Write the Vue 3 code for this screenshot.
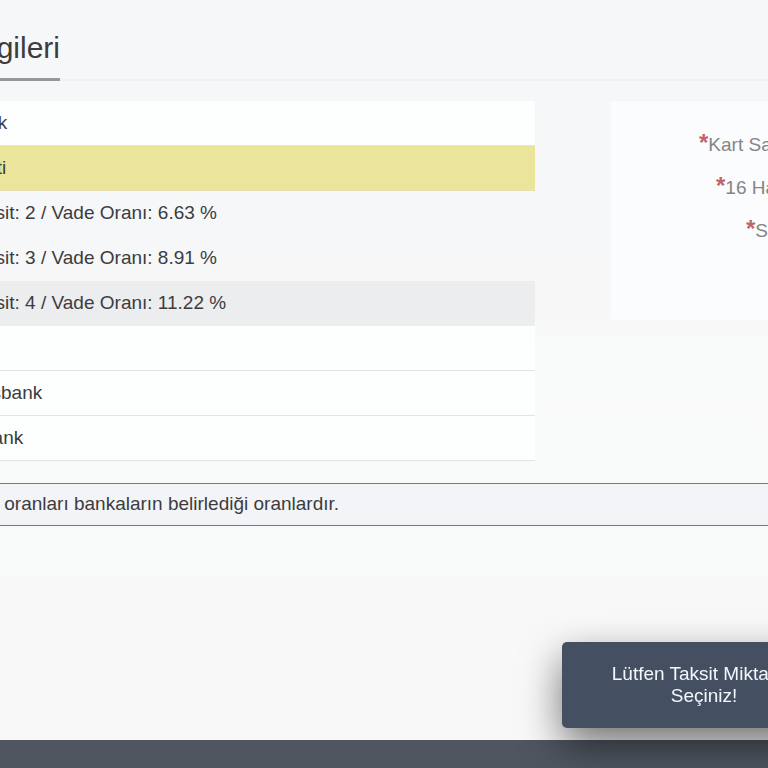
<script setup>
import { ref } from 'vue'

const banks = [
  { name: 'Akbank', installments: [] },
  {
    name: 'Garanti',
    installments: [
      { count: 2, rate: '6.63' },
      { count: 3, rate: '8.91' },
      { count: 4, rate: '11.22' }
    ]
  },
  { name: 'İşbank', installments: [] },
  { name: 'Finansbank', installments: [] },
  { name: 'Halkbank', installments: [] }
]

const fields = [
  { id: 'holder', label: 'Kart Sahibi' },
  { id: 'number', label: '16 Haneli No' },
  { id: 'expiry', label: 'Son Tarih' }
]

const selectedBank = ref('Garanti')
const selectedCount = ref(4)

const selectBank = (name) => {
  selectedBank.value = name
}
</script>

<template>
  <div class="page">
    <main class="content">
      <header class="heading">
        <h2>Ödeme Bilgileri</h2>
      </header>

      <div class="columns">
        <ul class="bank-list">
          <li v-for="bank in banks" :key="bank.name">
            <button
              class="bank"
              :class="{ active: selectedBank === bank.name }"
              @click="selectBank(bank.name)"
            >
              {{ bank.name }}
            </button>
            <template v-if="selectedBank === bank.name">
              <button
                v-for="item in bank.installments"
                :key="item.count"
                class="installment"
                :class="{ chosen: selectedCount === item.count }"
                @click="selectedCount = item.count"
              >
                Taksit: {{ item.count }} / Vade Oranı: {{ item.rate }} %
              </button>
            </template>
          </li>
        </ul>

        <form class="card-form">
          <div v-for="field in fields" :key="field.id" class="field" :class="field.id">
            <label :for="field.id"><span class="required">*</span>{{ field.label }}</label>
            <input :id="field.id" type="text" />
          </div>
        </form>
      </div>

      <p class="note">Vade oranları bankaların belirlediği oranlardır.</p>
    </main>

    <footer class="footer"></footer>

    <div class="toast" role="alert">Lütfen Taksit Miktarını Seçiniz!</div>
  </div>
</template>

<style>
body {
  background: #f8f9f9;
}
</style>

<style scoped>
.page {
  min-height: 100vh;
  display: flex;
  flex-direction: column;
  overflow: hidden;
  background: linear-gradient(#f6f7fa, #f7f7f8 300px, #f9fafa 360px, #f8f8f8);
  color: #3c3c3e;
  font-family: "Liberation Sans", Arial, sans-serif;
  font-size: 19px;
  line-height: 22px;
}

/* the content starts left of the visible area */
.content {
  flex: 1;
  margin-left: -56px;
}

.heading {
  display: flex;
  margin-bottom: 20px;
  padding-top: 30px;
  box-shadow: inset 0 -2px #eff0f2;
}

.heading h2 {
  display: flex;
  justify-content: flex-end;
  width: 116px;
  margin: 0;
  padding-bottom: 12px;
  border-bottom: 3px solid #98989a;
  font-size: 30px;
  font-weight: 400;
  line-height: 36px;
  white-space: nowrap;
}

.columns {
  display: grid;
  grid-template-columns: 1fr 157px;
  gap: 76px;
  align-items: start;
}

.bank-list {
  margin: 0;
  padding: 0;
  list-style: none;
}

.bank,
.installment {
  display: block;
  width: 100%;
  height: 45px;
  padding: 0;
  border: none;
  border-bottom: 1px solid #e2e3e4;
  background: #fdfefe;
  color: inherit;
  font: inherit;
  text-align: left;
  cursor: pointer;
}

.bank.active {
  border-color: #e5e1ae;
  background: #eae59a;
}

.installment {
  padding-left: 22px;
  border-color: transparent;
  background: transparent;
}

.installment.chosen {
  border-color: #eeeef0;
  background: #ecedef;
}

.card-form {
  height: 188px;
  padding-top: 31px;
  overflow: hidden;
  background: #fbfcfd;
}

.field {
  display: flex;
  gap: 10px;
  height: 43px;
  color: #858587;
  white-space: nowrap;
}

.field.holder {
  padding-left: 88px;
}

.field.number {
  padding-left: 105px;
}

.field.expiry {
  padding-left: 135px;
}

.field input {
  width: 160px;
  height: 26px;
  border: 1px solid #ccc;
}

.required {
  color: #c06468;
  font-size: 24px;
  font-weight: 700;
}

.note {
  margin: 22px 0 0;
  padding: 9px 0 10px 12px;
  border-top: 1px solid #77787c;
  border-bottom: 1px solid #77787c;
  background: #f3f4f7;
}

.footer {
  height: 28px;
  background: #4f5660;
}

.toast {
  position: fixed;
  right: -78px;
  bottom: 40px;
  box-sizing: border-box;
  width: 284px;
  padding: 21px 40px;
  border-radius: 5px;
  background: #445062;
  box-shadow: 0 16px 40px rgba(0, 0, 0, 0.55);
  color: #f2f7fc;
  text-align: center;
}
</style>
